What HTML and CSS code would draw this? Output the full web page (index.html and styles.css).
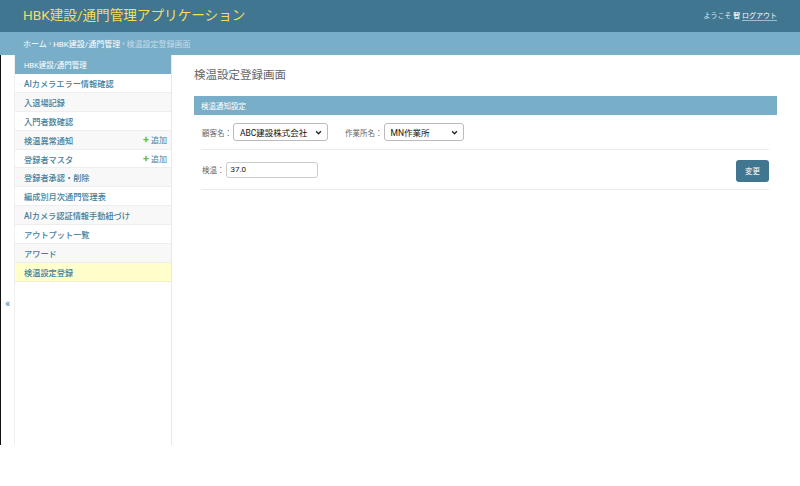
FILE: index.html
```html
<!DOCTYPE html>
<html lang="ja">
<head>
<meta charset="utf-8">
<title>検温設定登録画面</title>
<link rel="stylesheet" href="styles.css">
</head>
<body>
<header class="header">
  <div class="brand">HBK建設/通門管理アプリケーション</div>
  <div class="user-tools">ようこそ <strong>智</strong> <a class="logout" href="#">ログアウト</a></div>
</header>
<nav class="breadcrumbs"><a href="#">ホーム</a> › <a href="#">HBK建設/通門管理</a> › <span class="current">検温設定登録画面</span></nav>
<div class="main">
  <div class="toggle"><span class="toggle-icon">«</span></div>
  <aside class="sidebar">
    <div class="caption">HBK建設/通門管理</div>
    <div class="row r1"><a href="#">AIカメラエラー情報確認</a></div>
    <div class="row r2"><a href="#">入退場記録</a></div>
    <div class="row r1"><a href="#">入門者数確認</a></div>
    <div class="row r2"><a href="#">検温異常通知</a><a class="add" href="#"><span class="plus">+</span>追加</a></div>
    <div class="row r1"><a href="#">登録者マスタ</a><a class="add" href="#"><span class="plus">+</span>追加</a></div>
    <div class="row r2"><a href="#">登録者承認・削除</a></div>
    <div class="row r1"><a href="#">編成別月次通門管理表</a></div>
    <div class="row r2"><a href="#">AIカメラ認証情報手動紐づけ</a></div>
    <div class="row r1"><a href="#">アウトプット一覧</a></div>
    <div class="row r2"><a href="#">アワード</a></div>
    <div class="row current-row"><a href="#">検温設定登録</a></div>
  </aside>
  <section class="content">
    <h1 class="title">検温設定登録画面</h1>
    <div class="fieldset">
      <div class="fs-head">検温通知設定</div>
      <div class="form-row">
        <label class="lbl">顧客名：</label>
        <div class="select sel1"><span>ABC建設株式会社</span><svg class="chev" viewBox="0 0 10 10" width="7" height="7"><path d="M1.5 3.2 L5 6.8 L8.5 3.2" fill="none" stroke="#222" stroke-width="1.8"/></svg></div>
        <label class="lbl lbl2">作業所名：</label>
        <div class="select sel2"><span>MN作業所</span><svg class="chev" viewBox="0 0 10 10" width="7" height="7"><path d="M1.5 3.2 L5 6.8 L8.5 3.2" fill="none" stroke="#222" stroke-width="1.8"/></svg></div>
      </div>
      <div class="form-row row-temp">
        <label class="lbl">検温：</label>
        <div class="input">37.0</div>
        <button class="btn">変更</button>
      </div>
    </div>
  </section>
</div>
</body>
</html>
```
FILE: styles.css
```css
* { box-sizing: border-box; }
html, body { margin: 0; padding: 0; background: #fff; }
body { font-family: "Roboto", "Noto Sans CJK JP", sans-serif; color: #333; width: 800px; height: 486px; overflow: hidden; }
a { text-decoration: none; color: #447e9b; }

.header { height: 32px; background: #417690; display: flex; align-items: center; justify-content: space-between; padding: 0 23px; }
.brand { color: #f5dd5d; font-size: 13.6px; line-height: 1; margin-top: -1px; }
.user-tools { color: #e0ecf0; font-size: 7px; line-height: 1; }
.user-tools strong { font-weight: bold; color: #f0f0f0; }
.logout { color: #fff; text-decoration: underline; text-decoration-color: #9fbfcf; text-underline-offset: 2px; }

.breadcrumbs { height: 23px; background: #79aec8; color: #dbe9f0; font-size: 8px; display: flex; align-items: center; padding: 0 23px; white-space: pre; }
.breadcrumbs a { color: #fff; }
.breadcrumbs .current { color: #c4dce8; }

.main { display: flex; height: 390px; border-left: 1px solid #111; }
.toggle { width: 13px; display: flex; align-items: flex-start; justify-content: center; padding-top: 243px; }
.toggle-icon { color: #447e9b; font-size: 11px; line-height: 1; }

.sidebar { width: 158px; border-left: 1px solid #eee; border-right: 1px solid #e8e8e8; display: flex; flex-direction: column; }
.caption { height: 19px; background: #79aec8; color: #fff; font-size: 7.5px; display: flex; align-items: center; padding-left: 9px; }
.row { height: 18.9px; display: flex; align-items: center; justify-content: space-between; padding: 0 4px 0 9px; border-bottom: 1px solid #eeeeee; font-size: 8.2px; font-weight: 500; }
.row.r1 { background: #fff; }
.row.r2 { background: #f8f8f8; }
.row.current-row { background: #ffffcc; border-bottom-color: #f0f0d0; }
.add { font-weight: normal; font-size: 8px; display: flex; align-items: center; }
.plus { color: #70bf2b; font-weight: bold; font-size: 11px; margin-right: 2px; line-height: 1; }

.content { flex: 1; padding: 12px 23px 0 22px; }
.title { margin: 0; font-size: 11.5px; font-weight: normal; color: #666; line-height: 16px; }
.fieldset { margin-top: 13px; }
.fs-head { height: 19px; background: #79aec8; color: #fff; font-size: 7.5px; display: flex; align-items: center; padding-left: 7px; }
.form-row { margin: 0 8px 0 7px; border-bottom: 1px solid #eaeaea; display: flex; align-items: center; padding-left: 1px; }
.fieldset .form-row:nth-child(2) { height: 35px; }
.row-temp { height: 40px; }
.lbl { font-size: 7.5px; color: #666; margin-right: 1px; }
.lbl2 { margin-left: 17px; }
.select { height: 18px; border: 1px solid #bbb; border-radius: 3px; display: flex; align-items: center; justify-content: space-between; padding: 0 5px 0 6px; font-size: 8.5px; color: #111; background: #fff; }
.sel1 { width: 95px; }
.sel2 { width: 80px; }
.input { width: 92px; height: 16px; border: 1px solid #ccc; border-radius: 3px; font-size: 8px; color: #222; display: flex; align-items: center; padding-left: 4px; }
.btn { margin-left: auto; width: 33px; height: 22px; border: none; border-radius: 3px; background: #417690; color: #fff; font-family: inherit; font-size: 7.5px; padding: 0; margin-top: 2px; }
```
